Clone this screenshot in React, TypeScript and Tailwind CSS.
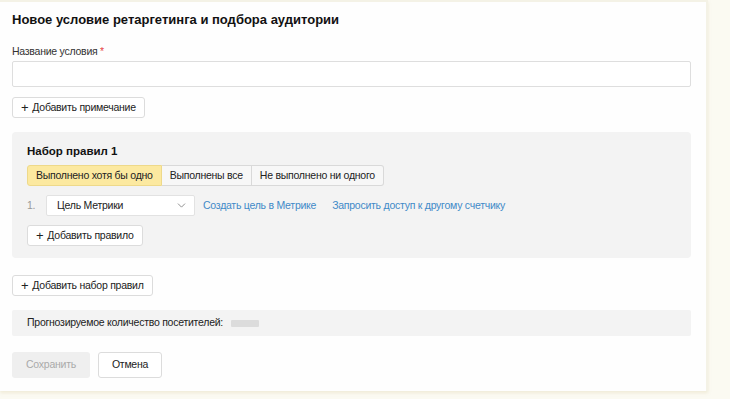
import { ChevronDown } from "lucide-react"

function PlusButton({ label, className = "" }: { label: string; className?: string }) {
  return (
    <button
      className={`inline-flex items-center gap-1 h-[21px] px-[8px] bg-white border border-[#dcdcdc] rounded-[3px] text-[10.5px] tracking-[-0.25px] text-[#222] ${className}`}
    >
      <span className="text-[13px] leading-none">+</span>
      <span>{label}</span>
    </button>
  )
}

export default function App() {
  return (
    <div
      className="w-[730px] h-[399px] bg-[#fbfaf2] overflow-hidden"
      style={{ fontFamily: "'Liberation Sans', Arial, sans-serif" }}
    >
      <div className="w-[708px] h-[391px] bg-[#fefefe] border-t-2 border-r-2 border-[#f4f2e6] shadow-[0_2px_3px_rgba(220,210,170,0.35)] pl-3 pr-[15px] pt-[8px]">
        {/* Header */}
        <h1 className="text-[13px] font-bold text-[#111] leading-5">
          Новое условие ретаргетинга и подбора аудитории
        </h1>

        {/* Name */}
        <div className="mt-[13px] text-[10.5px] tracking-[-0.25px] text-[#333] leading-4">
          Название условия <span className="text-[#e64646]">*</span>
        </div>
        <div className="mt-[2px] h-[26px] border border-[#dedede] rounded-[2px] bg-white" />

        <PlusButton label="Добавить примечание" className="mt-[10px]" />

        {/* Rule set */}
        <div className="mt-[13px] h-[126px] bg-[#f3f3f3] rounded-[4px] px-[15px] pt-[11px]">
          <div className="text-[11.5px] font-bold text-[#111] leading-4">Набор правил 1</div>
          <div className="mt-[6px] flex h-[21px] text-[10.5px] tracking-[-0.25px] text-[#222]">
            <div className="flex items-center px-[8px] bg-[#fce9a0] border border-[#eed98a] rounded-l-[3px]">
              Выполнено хотя бы одно
            </div>
            <div className="flex items-center px-[8px] bg-[#f7f7f7] border border-l-0 border-[#d9d9d9]">
              Выполнены все
            </div>
            <div className="flex items-center px-[8px] bg-[#f7f7f7] border border-l-0 border-[#d9d9d9] rounded-r-[3px]">
              Не выполнено ни одного
            </div>
          </div>

          <div className="mt-[9px] flex items-center h-[21px] text-[10.5px] tracking-[-0.25px]">
            <span className="w-[19px] text-[#999]">1.</span>
            <div className="flex items-center justify-between w-[149px] h-[21px] bg-white border border-[#e2e2e2] rounded-[2px] pl-[10px] pr-[6px] text-[#222]">
              <span>Цель Метрики</span>
              <ChevronDown className="w-[13px] h-[13px] text-[#777]" strokeWidth={1.5} />
            </div>
            <a className="ml-2 text-[#3f8ac8]">Создать цель в Метрике</a>
            <a className="ml-4 text-[#3f8ac8]">Запросить доступ к другому счетчику</a>
          </div>

          <PlusButton label="Добавить правило" className="mt-[9px]" />
        </div>

        <PlusButton label="Добавить набор правил" className="mt-[17px]" />

        {/* Forecast */}
        <div className="mt-[13px] h-[26px] bg-[#f3f3f3] rounded-[2px] flex items-center px-[15px] text-[10.5px] tracking-[-0.25px] text-[#222]">
          <span>Прогнозируемое количество посетителей:</span>
          <span className="ml-[8px] inline-block w-[28px] h-[7px] bg-[#dcdcdc] rounded-[1px]" />
        </div>

        {/* Actions */}
        <div className="mt-4 flex gap-2">
          <button className="h-[26px] w-[78px] bg-[#efefef] rounded-[3px] text-[10.5px] tracking-[-0.25px] text-[#aaa]">
            Сохранить
          </button>
          <button className="h-[26px] w-[64px] bg-white border border-[#dcdcdc] rounded-[3px] text-[10.5px] tracking-[-0.25px] text-[#222]">
            Отмена
          </button>
        </div>
      </div>
    </div>
  )
}
